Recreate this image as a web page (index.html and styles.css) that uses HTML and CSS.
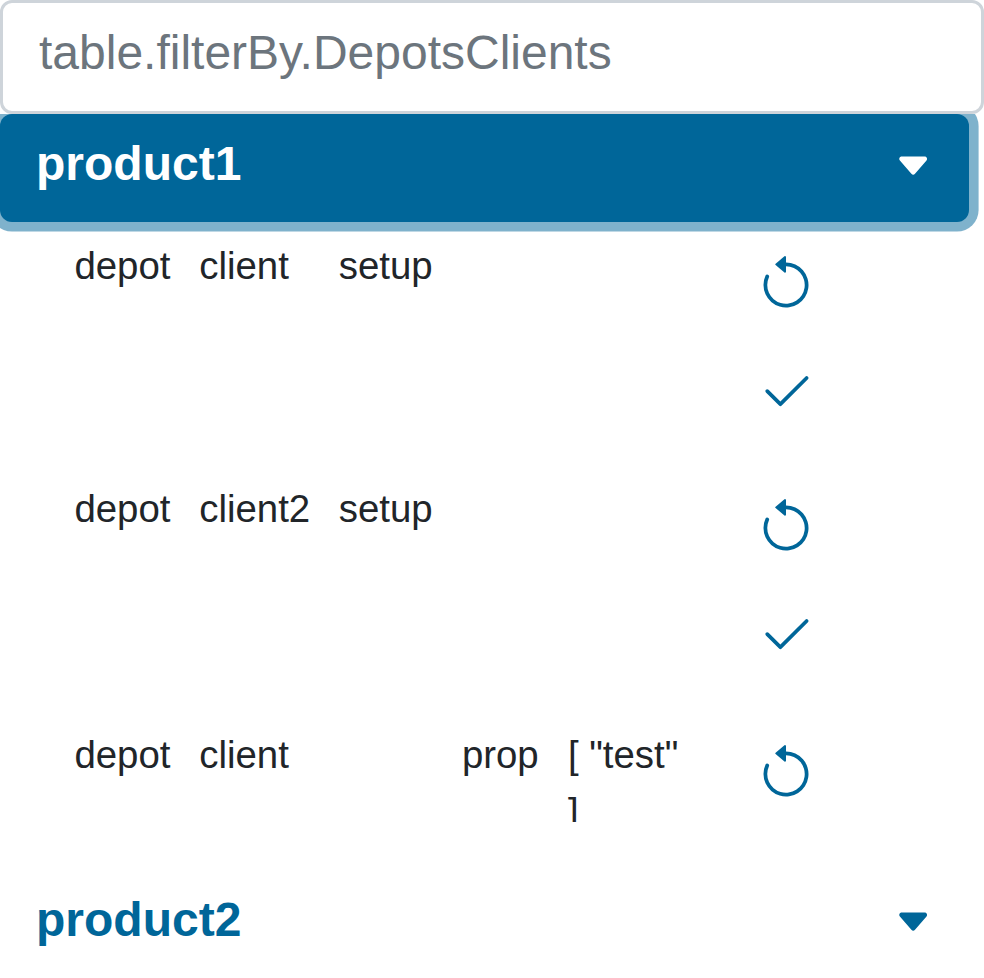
FILE: index.html
```html
<!DOCTYPE html>
<html lang="en">
<head>
<meta charset="utf-8">
<title>Depots and clients</title>
<link rel="stylesheet" href="styles.css">
</head>
<body>
<svg class="defs" aria-hidden="true">
<symbol id="reset" viewBox="0 0 16 16"><path fill-rule="evenodd" d="M8 3a5 5 0 1 1-4.546 2.914.5.5 0 0 0-.908-.417A6 6 0 1 0 8 2v1z"/><path d="M8 4.466V.534a.25.25 0 0 0-.41-.192L5.23 2.308a.25.25 0 0 0 0 .384l2.36 1.966A.25.25 0 0 0 8 4.466z"/></symbol>
<symbol id="check" viewBox="0 0 16 16"><path d="M13.854 3.646a.5.5 0 0 1 0 .708l-7 7a.5.5 0 0 1-.708 0l-3.5-3.5a.5.5 0 1 1 .708-.708L6.5 10.293l6.646-6.647a.5.5 0 0 1 .708 0z"/></symbol>
<symbol id="caret" viewBox="0 0 16 16"><path d="M7.247 11.14 2.451 5.658C1.885 5.013 2.345 4 3.204 4h9.592a1 1 0 0 1 .753 1.659l-4.796 5.48a1 1 0 0 1-1.506 0z"/></symbol>
</svg>
<input class="filter" type="text" placeholder="table.filterBy.DepotsClients">
<button class="product active"><span>product1</span><svg class="caret"><use href="#caret"/></svg></button>
<div class="rows">
<div class="row"><span>depot</span><span>client</span><span>setup</span><span></span><span></span><div class="actions"><svg><use href="#reset"/></svg><svg class="check"><use href="#check"/></svg></div></div>
<div class="row"><span>depot</span><span>client2</span><span>setup</span><span></span><span></span><div class="actions"><svg><use href="#reset"/></svg><svg class="check"><use href="#check"/></svg></div></div>
<div class="row last"><span>depot</span><span>client</span><span></span><span>prop</span><span class="value">[ "test" ]</span><div class="actions"><svg><use href="#reset"/></svg></div></div>
</div>
<button class="product"><span>product2</span><svg class="caret"><use href="#caret"/></svg></button>
</body>
</html>
```
FILE: styles.css
```css
* { box-sizing: border-box; }
body {
  margin: 0;
  height: 978px;
  overflow: hidden;
  background: #fff;
  color: #212529;
  font-family: "Liberation Sans", Arial, sans-serif;
}
.defs { display: none; }
.filter {
  display: block;
  width: 984px;
  height: 114px;
  padding: 0 36px 9px;
  border: 3px solid #ced4da;
  border-radius: 12px;
  background: #fff;
  font: 48px/72px "Liberation Sans", Arial, sans-serif;
}
.filter::placeholder { color: #6c757d; opacity: 1; }
.product {
  display: flex;
  align-items: center;
  justify-content: space-between;
  width: 969px;
  height: 108px;
  padding: 0 36.3px 8px 36px;
  border: 0;
  border-radius: 12px;
  background: transparent;
  color: #006699;
  font: bold 48px/72px "Liberation Sans", Arial, sans-serif;
}
.product.active {
  background: #006699;
  color: #fff;
  box-shadow: 0 0 0 9.6px rgba(0, 102, 153, .5);
  clip-path: inset(0 -10px -10px -10px);
}
.caret { width: 38.4px; height: 38.4px; margin-top: 4.6px; fill: currentColor; }
.rows { height: 648px; padding: 15px 0 0 74.4px; }
.row {
  display: grid;
  grid-template-columns: 124.8px 139.5px 123.2px 106px 187px 70px;
  height: 243px;
  font-size: 38.4px;
  line-height: 57.6px;
}
.row:nth-child(2) { height: 246px; }
.row.last { height: 96px; overflow: hidden; }
.value { width: 115px; line-height: 57px; }
.actions { display: flex; flex-direction: column; padding: 18px 0 0 1px; }
.actions svg { width: 60px; height: 60px; flex: none; fill: #006699; }
.actions .check { margin-top: 48px; }
```
